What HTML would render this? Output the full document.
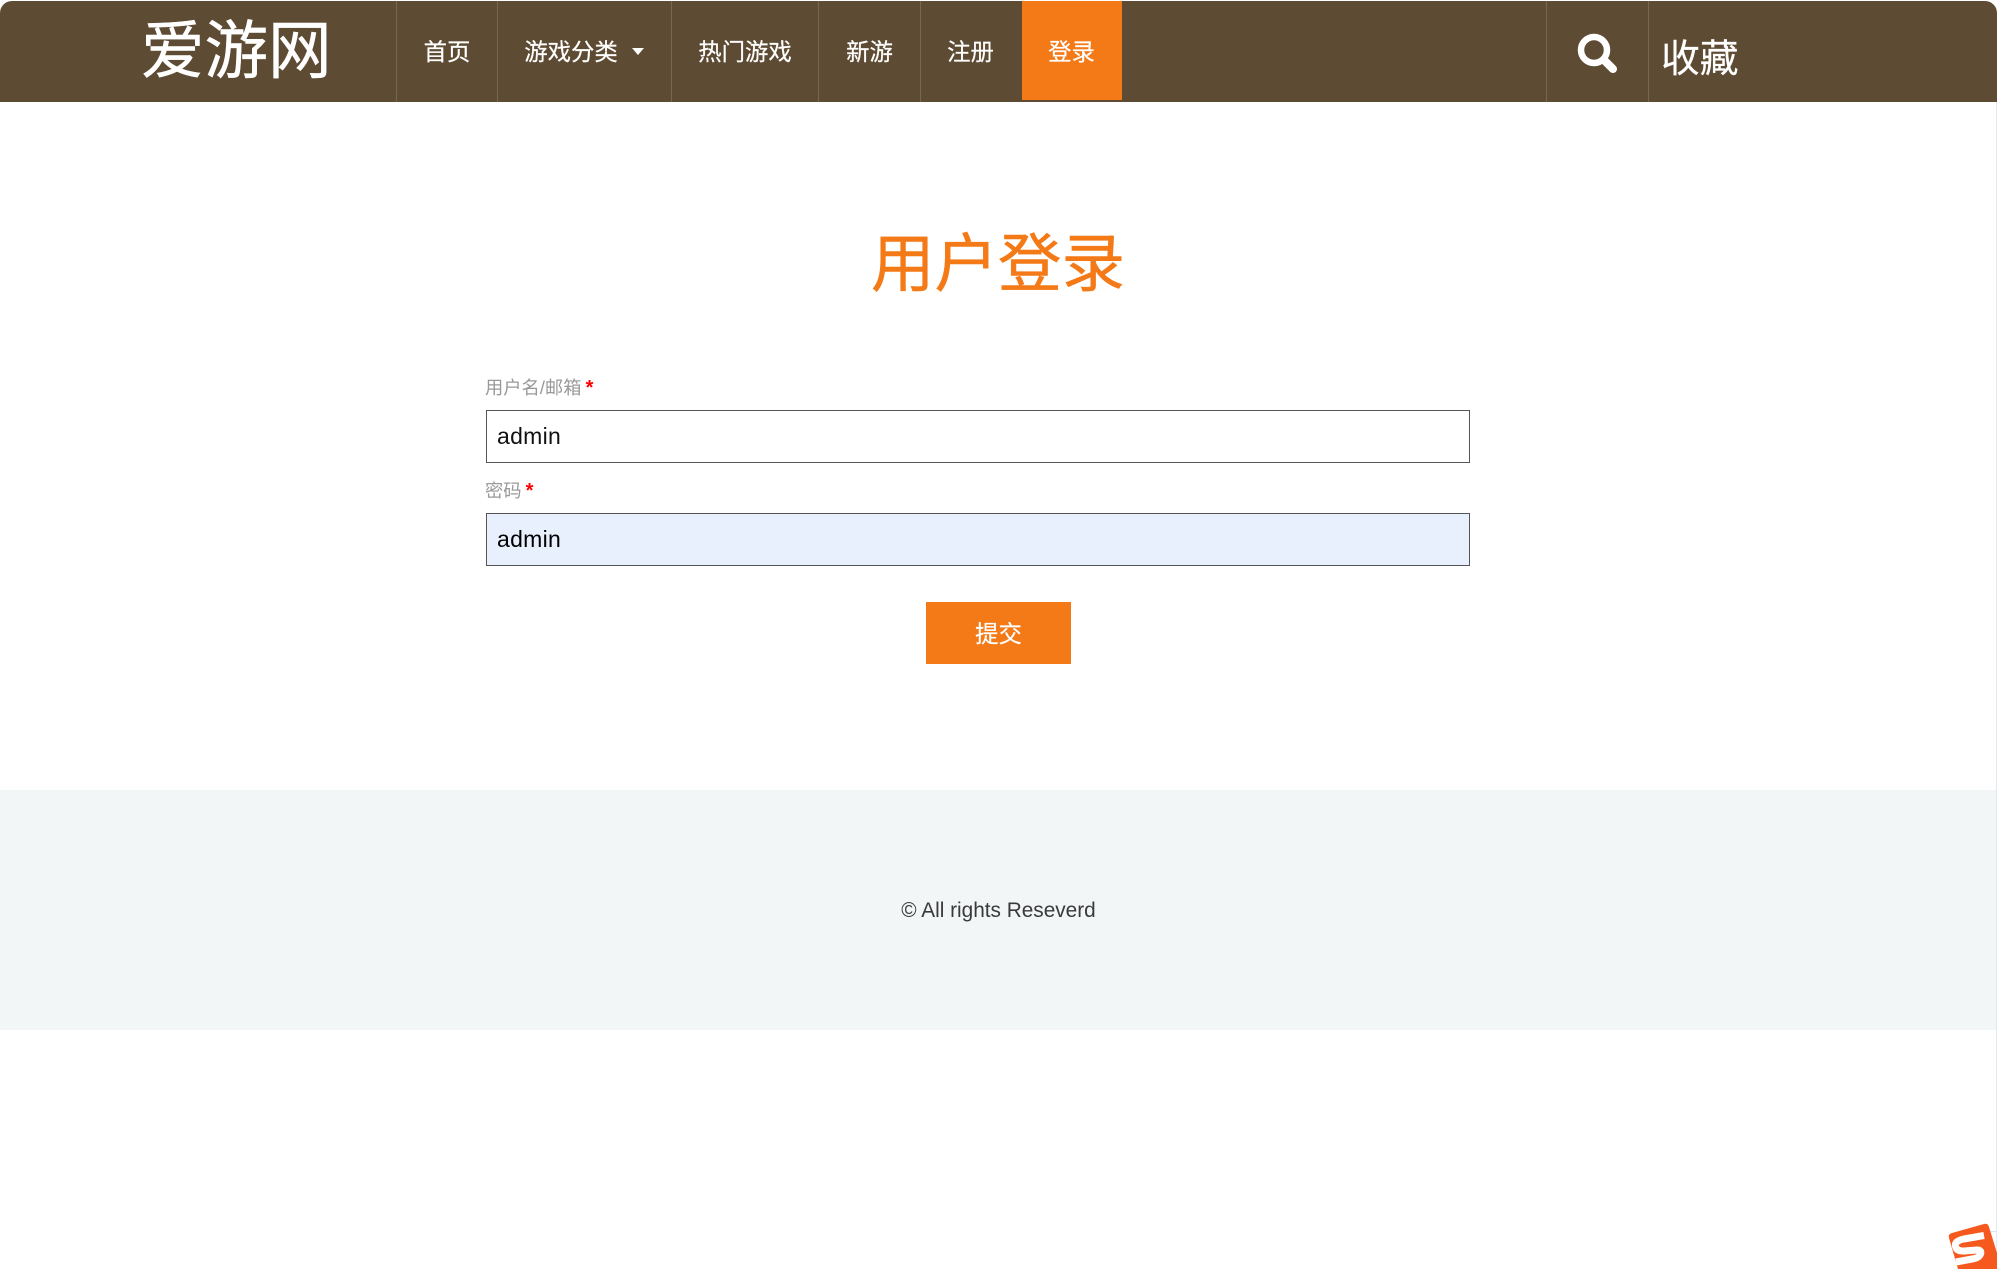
<!DOCTYPE html>
<html lang="zh">
<head>
<meta charset="utf-8">
<title>用户登录</title>
<style>
html,body{margin:0;padding:0;background:#fff;}
body{width:1997px;height:1269px;position:relative;overflow:hidden;font-family:"Liberation Sans","Noto Sans CJK SC",sans-serif;}
.a{position:absolute;white-space:nowrap;}
#nav{left:0;top:1px;width:1997px;height:101px;background:#5e4b33;border-radius:12px 12px 0 0;}
.d{position:absolute;top:1px;width:1px;height:101px;background:#776650;}
.n{position:absolute;top:2px;height:101px;line-height:101px;font-size:23.4px;color:#fff;text-align:center;-webkit-text-stroke:.2px #fff;}
.lb{font-size:18.3px;color:#999;line-height:24px;}
.lb b{color:#f00;font-weight:700;font-size:20px;margin-left:-1px;}
.in{box-sizing:border-box;left:486px;width:984px;height:53px;border:1px solid #555;line-height:51px;padding-left:10px;font-size:23px;letter-spacing:.3px;color:#111;}
</style>
</head>
<body>
<div class="a" id="nav"></div>
<div class="a" style="left:141px;top:10px;font-size:63.5px;line-height:84px;color:#fff;-webkit-text-stroke:.5px #fff;">爱游网</div>
<div class="d" style="left:396px"></div>
<div class="d" style="left:497px"></div>
<div class="d" style="left:671px"></div>
<div class="d" style="left:818px"></div>
<div class="d" style="left:920px"></div>
<div class="d" style="left:1546px"></div>
<div class="d" style="left:1648px"></div>
<div class="n" style="left:397px;width:100px">首页</div>
<div class="n" style="left:524px;width:94px;white-space:nowrap">游戏分类</div>
<svg class="a" style="left:632px;top:48px" width="12" height="7" viewBox="0 0 12 7"><path d="M0 0H12L6 7Z" fill="#fff"/></svg>
<div class="n" style="left:672px;width:146px">热门游戏</div>
<div class="n" style="left:819px;width:101px">新游</div>
<div class="n" style="left:921px;width:99px">注册</div>
<div class="a" style="left:1022px;top:1px;width:100px;height:99px;background:#f47a17;"></div>
<div class="n" style="left:1021px;width:101px">登录</div>
<svg class="a" style="left:1577px;top:33px" width="41" height="41" viewBox="0 0 41 41"><circle cx="17" cy="17" r="13" fill="none" stroke="#fff" stroke-width="6.5"/><path d="M27 27L36 36" stroke="#fff" stroke-width="8" stroke-linecap="round"/></svg>
<div class="a" style="left:1661px;top:32px;font-size:38.8px;line-height:56px;color:#fff;-webkit-text-stroke:.2px #fff;">收藏</div>

<div class="a" style="left:871px;top:223px;font-size:63.5px;line-height:84px;color:#f47a17;-webkit-text-stroke:.5px #f47a17;">用户登录</div>

<div class="a lb" style="left:485px;top:376px;">用户名/邮箱 <b>*</b></div>
<div class="a in" style="top:410px;background:#fff;">admin</div>
<div class="a lb" style="left:485px;top:479px;">密码 <b>*</b></div>
<div class="a in" style="top:513px;background:#e8f0fe;color:#000;">admin</div>
<div class="a" style="left:926px;top:602px;width:145px;height:62px;line-height:64px;background:#f47a17;color:#fff;font-size:23.4px;text-align:center;-webkit-text-stroke:.2px #fff;">提交</div>

<div class="a" style="left:0;top:790px;width:1997px;height:240px;background:#f3f6f7;"></div>
<div class="a" style="left:0;top:897px;width:1997px;text-align:center;font-size:20.8px;line-height:28px;color:#3a3a3a;">© All rights Reseverd</div>

<div class="a" style="left:1996px;top:102px;width:1px;height:1167px;background:#e4e8ef;"></div>
<div class="a" style="left:1985px;top:1231px;width:12px;height:1px;background:#dfe6f2;"></div>
<svg class="a" style="left:1947px;top:1222px" width="50" height="47" viewBox="0 0 50 47">
<path d="M5 11Q1 12 2 16L11 47L50 47V31L42 5Q41 1 37 2Z" fill="#f5591d"/>
<path d="M37 13.5L17 17Q7 19 8.500 24.500Q10 29.500 17 29L30 28Q35 28 33.500 32Q32 36 25 37L9 40" fill="none" stroke="#fff" stroke-width="7" stroke-linecap="butt"/>
</svg>
</body>
</html>
